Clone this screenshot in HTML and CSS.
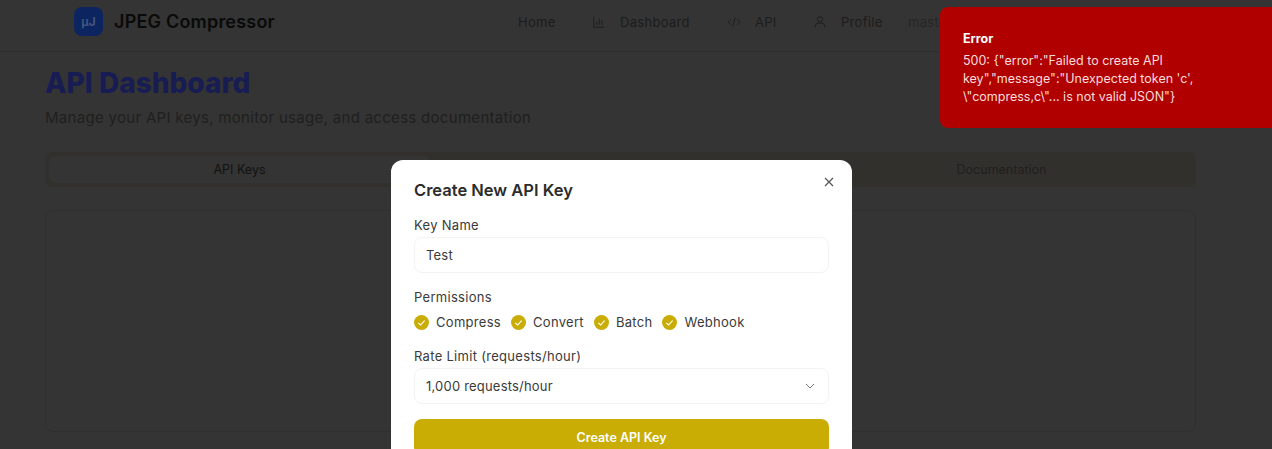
FILE: index.html
```html
<!DOCTYPE html>
<html>
<head>
  <title>API Dashboard - JPEG Compressor</title>
  <link rel="stylesheet" href="styles.css">
</head>
<body>
  <header class="site-header">
    <div class="brand">
      <span class="logo">µJ</span>
      <span class="brand-name">JPEG Compressor</span>
    </div>
    <nav class="menu">
      <a class="menu-home">Home</a>
      <a class="menu-dash">
        <svg class="menu-icon" viewBox="0 0 24 24"><path d="M3 3v18h18M8 17v-5M12.500 17V6M17 17v-8"/></svg>
        Dashboard
      </a>
      <a class="menu-api">
        <svg class="menu-icon" viewBox="0 0 24 24"><path d="M7 7l-5 5 5 5M17 7l5 5-5 5M14 4l-4 16"/></svg>
        API
      </a>
      <a class="menu-profile">
        <svg class="menu-icon" viewBox="0 0 24 24"><circle cx="12" cy="7.500" r="4.500"/><path d="M4 21v-2a5 5 0 0 1 5-5h6a5 5 0 0 1 5 5v2"/></svg>
        Profile
      </a>
      <a class="menu-user">master</a>
    </nav>
  </header>

  <main class="page">
    <h1 class="page-title">API Dashboard</h1>
    <p class="page-sub">Manage your API keys, monitor usage, and access documentation</p>
    <div class="tabs">
      <div class="tab tab-active">API Keys</div>
      <div class="tab">Usage</div>
      <div class="tab">Documentation</div>
    </div>
    <div class="card"></div>
  </main>

  <div class="overlay">
    <div class="modal">
      <button class="modal-close">
        <svg viewBox="0 0 10 10"><path d="M1 1l8 8M9 1l-8 8"/></svg>
      </button>
      <h2 class="modal-title">Create New API Key</h2>
      <div class="field">
        <label class="field-label">Key Name</label>
        <div class="form-control">Test</div>
      </div>
      <div class="field">
        <label class="field-label">Permissions</label>
        <div class="perms">
          <span class="perm"><svg class="check" viewBox="0 0 15 15"><circle cx="7.500" cy="7.500" r="7.500"/><path d="M4.300 7.800l2.300 2.200 4-4.300"/></svg>Compress</span>
          <span class="perm"><svg class="check" viewBox="0 0 15 15"><circle cx="7.500" cy="7.500" r="7.500"/><path d="M4.300 7.800l2.300 2.200 4-4.300"/></svg>Convert</span>
          <span class="perm"><svg class="check" viewBox="0 0 15 15"><circle cx="7.500" cy="7.500" r="7.500"/><path d="M4.300 7.800l2.300 2.200 4-4.300"/></svg>Batch</span>
          <span class="perm"><svg class="check" viewBox="0 0 15 15"><circle cx="7.500" cy="7.500" r="7.500"/><path d="M4.300 7.800l2.300 2.200 4-4.300"/></svg>Webhook</span>
        </div>
      </div>
      <div class="field">
        <label class="field-label">Rate Limit (requests/hour)</label>
        <div class="form-control form-select">
          1,000 requests/hour
          <svg class="chevron" viewBox="0 0 10 6"><path d="M1 1l4 4 4-4"/></svg>
        </div>
      </div>
      <button class="btn-create">Create API Key</button>
    </div>
  </div>

  <div class="toast">
    <div class="toast-title">Error</div>
    <div class="toast-text">500: {"error":"Failed to create API<br>key","message":"Unexpected token 'c',<br>\"compress,c\"... is not valid JSON"}</div>
  </div>
</body>
</html>
```

FILE: styles.css
```css
html, body {
  margin: 0;
  height: 100%;
  overflow: hidden;
}

body {
  font-family: Inter, "Open Sans", sans-serif;
  background-color: #343434;
  color: #1c1c1c;
}

.site-header {
  display: flex;
  align-items: flex-start;
  height: 44px;
  padding: 7px 0 0 74px;
  border-bottom: 1px solid #2e2e2e;
}

.brand {
  display: flex;
  align-items: center;
  gap: 11px;
  width: 444px;
}

.logo {
  width: 29px;
  height: 29px;
  border-radius: 8px;
  background-color: #0c2560;
  color: #46597f;
  font-size: 12px;
  font-weight: 600;
  display: flex;
  align-items: center;
  justify-content: center;
}

.brand-name {
  font-size: 18px;
  font-weight: 600;
  color: #0a0a0a;
  letter-spacing: 0.2px;
}

.menu {
  display: flex;
  align-items: center;
  height: 29px;
  font-size: 13px;
  color: #1c1c1c;
  letter-spacing: 0.3px;
}

.menu a {
  display: flex;
  align-items: center;
}

.menu-home { width: 74px; }
.menu-dash { width: 135px; }
.menu-api { width: 86px; }
.menu-profile { width: 95px; }
.menu-user { color: #262626; }

.menu-icon {
  width: 14px;
  height: 14px;
  margin-right: 14px;
  fill: none;
  stroke: #1c1c1c;
  stroke-width: 1.500;
}

.page {
  padding: 0 76px 0 45px;
}

.page-title {
  margin: 14px 0 0;
  font-size: 28px;
  line-height: 34px;
  font-weight: 800;
  color: #171d52;
}

.page-sub {
  margin: 7px 0 0;
  font-size: 15px;
  line-height: 22px;
  color: #1f1f1f;
  letter-spacing: 0.3px;
}

.tabs {
  display: grid;
  grid-template-columns: 1fr 1fr 1fr;
  margin-top: 23px;
  padding: 4px;
  height: 27px;
  border-radius: 8px;
  background-color: #32302c;
}

.tab {
  display: flex;
  align-items: center;
  justify-content: center;
  border-radius: 6px;
  font-size: 12.500px;
  color: #1f1f1f;
}

.tab-active {
  background-color: #343434;
  color: #121212;
}

.card {
  margin-top: 23px;
  height: 220px;
  border: 1px solid #2f2f2f;
  border-radius: 8px;
}

.overlay {
  position: fixed;
  top: 0;
  right: 0;
  bottom: 0;
  left: 0;
  padding: 160px 0 0 391px;
  overflow: hidden;
}

.modal {
  position: relative;
  box-sizing: border-box;
  width: 461px;
  padding: 19px 23px 24px;
  border-radius: 12px;
  background-color: #ffffff;
  color: #333333;
}

.modal-close {
  position: absolute;
  top: 17px;
  right: 18px;
  width: 10px;
  height: 10px;
  padding: 0;
  border: none;
  background: none;
}

.modal-close svg {
  display: block;
  fill: none;
  stroke: #555555;
  stroke-width: 1.200;
}

.modal-title {
  margin: 0;
  font-size: 16.500px;
  line-height: 22px;
  font-weight: 600;
  color: #2c2c2c;
}

.field {
  margin-top: 14px;
}

.field-label {
  display: block;
  font-size: 13px;
  line-height: 20px;
  color: #3a3a3a;
  letter-spacing: 0.3px;
}

.form-control {
  box-sizing: border-box;
  display: flex;
  align-items: center;
  justify-content: space-between;
  height: 36px;
  margin-top: 2px;
  padding: 0 11px;
  border: 1px solid #f3f3f3;
  border-radius: 8px;
  font-size: 13px;
  color: #3a3a3a;
  letter-spacing: 0.2px;
}

.chevron {
  width: 10px;
  height: 6px;
  margin-right: 2px;
  fill: none;
  stroke: #777777;
  stroke-width: 1;
}

.perms {
  display: flex;
  gap: 10px;
  margin-top: 5px;
}

.perm {
  display: flex;
  align-items: center;
  gap: 7px;
  font-size: 13px;
  line-height: 20px;
  color: #3a3a3a;
  letter-spacing: 0.3px;
}

.check {
  width: 15px;
  height: 15px;
}

.check circle {
  fill: #c9ad05;
}

.check path {
  fill: none;
  stroke: #ffffff;
  stroke-width: 1.100;
}

.btn-create {
  display: block;
  width: 100%;
  height: 36px;
  margin-top: 15px;
  border: none;
  border-radius: 8px;
  background-color: #c9ad05;
  color: #ffffff;
  font-family: inherit;
  font-size: 12.500px;
  font-weight: 600;
}

.toast {
  position: fixed;
  top: 7px;
  left: 940px;
  right: -20px;
  box-sizing: border-box;
  height: 121px;
  padding: 24px 23px;
  border-radius: 8px;
  background-color: #b00000;
  color: #f8dcdc;
}

.toast-title {
  font-size: 12.500px;
  line-height: 16px;
  font-weight: 700;
  color: #ffffff;
}

.toast-text {
  margin-top: 5px;
  font-size: 12.500px;
  line-height: 18px;
}
```
